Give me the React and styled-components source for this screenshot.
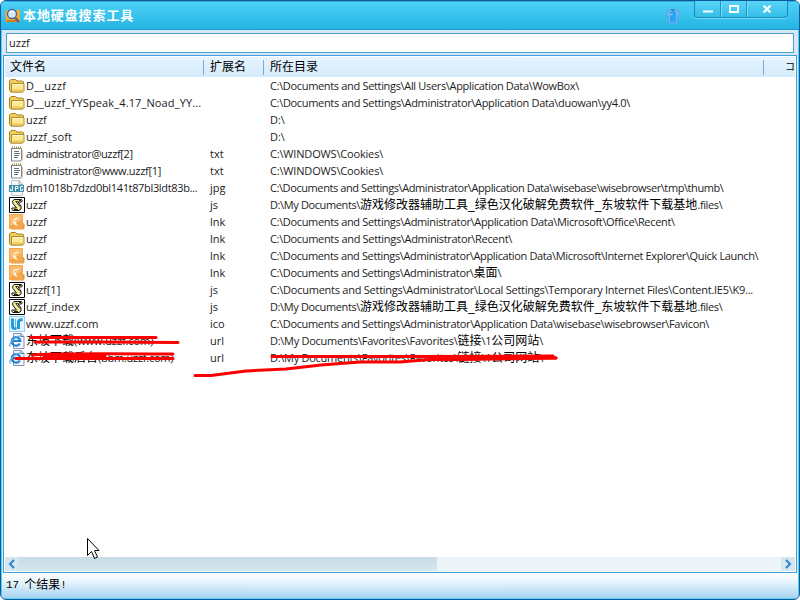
import React, { useState } from 'react';
import styled, { createGlobalStyle } from 'styled-components'

const GlobalStyle = createGlobalStyle`
body {
margin: 0;
overflow: hidden;
background-color: #ffffff;
}
* {
box-sizing: border-box;
}
svg {
flex-shrink: 0;
}
`

const latin = '"Open Sans", "Noto Sans", "Noto Sans CJK SC", sans-serif'
const cjk = '"Liberation Sans", "Noto Sans CJK SC", sans-serif'

// nameGap and dirGap are the letter spacing of each column, in px
const rows = [
  { icon: 'folder', name: 'D__uzzf', nameGap: 0.25, ext: '', dirGap: -0.33, dir: ['C:\\Documents and Settings\\All Users\\Application Data\\WowBox\\'] },
  { icon: 'folder', name: 'D__uzzf_YYSpeak_4.17_Noad_YY...', nameGap: 0.13, ext: '', dirGap: -0.32, dir: ['C:\\Documents and Settings\\Administrator\\Application Data\\duowan\\yy4.0\\'] },
  { icon: 'folder', name: 'uzzf', nameGap: 0, ext: '', dirGap: 0, dir: ['D:\\'] },
  { icon: 'folder', name: 'uzzf_soft', nameGap: 0.1, ext: '', dirGap: 0, dir: ['D:\\'] },
  { icon: 'text', name: 'administrator@uzzf[2]', nameGap: -0.36, ext: 'txt', dirGap: -0.17, dir: ['C:\\WINDOWS\\Cookies\\'] },
  { icon: 'text', name: 'administrator@www.uzzf[1]', nameGap: -0.31, ext: 'txt', dirGap: -0.17, dir: ['C:\\WINDOWS\\Cookies\\'] },
  { icon: 'jpg', name: 'dm1018b7dzd0bl141t87bl3ldt83b...', nameGap: -0.34, ext: 'jpg', dirGap: -0.41, dir: ['C:\\Documents and Settings\\Administrator\\Application Data\\wisebase\\wisebrowser\\tmp\\thumb\\'] },
  { icon: 'script', name: 'uzzf', nameGap: 0, ext: 'js', dirGap: -0.38, dir: ['D:\\My Documents\\', '游戏修改器辅助工具_绿色汉化破解免费软件_东坡软件下载基地', '.files\\'] },
  { icon: 'orange', name: 'uzzf', nameGap: 0, ext: 'lnk', dirGap: -0.34, dir: ['C:\\Documents and Settings\\Administrator\\Application Data\\Microsoft\\Office\\Recent\\'] },
  { icon: 'folder', name: 'uzzf', nameGap: 0, ext: 'lnk', dirGap: -0.32, dir: ['C:\\Documents and Settings\\Administrator\\Recent\\'] },
  { icon: 'orange', name: 'uzzf', nameGap: 0, ext: 'lnk', dirGap: -0.36, dir: ['C:\\Documents and Settings\\Administrator\\Application Data\\Microsoft\\Internet Explorer\\Quick Launch\\'] },
  { icon: 'orange', name: 'uzzf', nameGap: 0, ext: 'lnk', dirGap: -0.36, dir: ['C:\\Documents and Settings\\Administrator\\', '桌面', '\\'] },
  { icon: 'script', name: 'uzzf[1]', nameGap: 0, ext: 'js', dirGap: -0.25, dir: ['C:\\Documents and Settings\\Administrator\\Local Settings\\Temporary Internet Files\\Content.IE5\\K9...'] },
  { icon: 'script', name: 'uzzf_index', nameGap: 0, ext: 'js', dirGap: -0.38, dir: ['D:\\My Documents\\', '游戏修改器辅助工具_绿色汉化破解免费软件_东坡软件下载基地', '.files\\'] },
  { icon: 'ico', name: 'www.uzzf.com', nameGap: -0.17, ext: 'ico', dirGap: -0.35, dir: ['C:\\Documents and Settings\\Administrator\\Application Data\\wisebase\\wisebrowser\\Favicon\\'] },
  { icon: 'ie', cjkName: '东坡下载', name: '(www.uzzf.com)', nameGap: -0.1, ext: 'url', dirGap: -0.27, dir: ['D:\\My Documents\\Favorites\\Favorites\\', '链接', '\\1', '公司网站', '\\'] },
  { icon: 'ie', cjkName: '东坡下载后台', name: '(bbm.uzzf.com)', nameGap: -0.25, ext: 'url', dirGap: -0.27, dir: ['D:\\My Documents\\Favorites\\Favorites\\', '链接', '\\1', '公司网站', '\\'] },
]

const FolderIcon = () => (
  <svg width="16" height="16" viewBox="0 0 16 16">
    <path d="M.5 12.500V3L2 1.500h4.500L8 3h5.500l1 1v9l-1 1H2z" fill="#f0cf5d" stroke="#a98125" />
    <path d="M2.500 5.500h12.500v7l-1.500 1.500H2.500z" fill="#fbe993" stroke="#b48b2b" />
    <path d="M3.500 6.500h10.500" stroke="#fff9cf" />
    <path d="M3.500 11.500h11v1.500h-11z" fill="#edc657" />
  </svg>
)

const TextIcon = () => (
  <svg width="16" height="16" viewBox="0 0 16 16">
    <path d="M2.500 2.500h10v11l-1 1.500h-9z" fill="#fff" stroke="#85858c" />
    <path d="M2.500 2v13" stroke="#6678a8" />
    <path d="M3 1.500h10" stroke="#a88952" strokeWidth="2" strokeDasharray="1 1" />
    <path d="M5 5.500h5M5 7.500h6M5 9.500h5M5 11.500h4" stroke="#6c6c74" />
    <path d="M13.500 4v10l-1.500 1.500H4" fill="none" stroke="#c8c8c0" />
  </svg>
)

const JpgIcon = () => (
  <svg width="16" height="16" viewBox="0 0 16 16">
    <path d="M2.500.5h8l3 3v12h-11z" fill="#f4f5f6" stroke="#bfc8cc" />
    <path d="M10 .5v4h4" fill="#dce5e9" stroke="#9db2bc" />
    <path d="M0 5h15v7H0z" fill="#438fae" />
    <path d="M3.500 6v4.500H1.500V8.500M6.500 11V6.500H9v2H6.500M14 6.500h-2.500v4h2V8.500" fill="none" stroke="#eefaff" />
  </svg>
)

const ScriptIcon = () => (
  <svg width="16" height="16" viewBox="0 0 16 16">
    <path d="M.5.500h15v15H.5z" fill="#fff" stroke="#000" />
    <path d="M5 2.500h7.500q1.500 1 0 2.500H9l3 4q1 4-2 4.500H4q-2-1-1-2.500h4.500L4 6.500Q2.500 4 5 2.500z" fill="#f1eb9c" stroke="#111" />
    <path d="M6.500 4.500h2l-1 1 3.500 4M5 12.500h4M10 3.500h2" fill="none" stroke="#222" />
  </svg>
)

const OrangeIcon = () => (
  <svg width="16" height="16" viewBox="0 0 16 16">
    <path d="M13 8l2.500 2v4l-1 1.500H2z" fill="#dc9a48" />
    <path d="M0 1q0-1 1-1h12q1 0 1 1v13q0 1-1 1H1q-1 0-1-1z" fill="#f3a64a" />
    <path d="M1 1h12v5L1 12z" fill="#ffc682" opacity=".6" />
    <path d="M10.500 3.500Q4 3.500 3.500 7.500q1 4 5.500 4.500-3-3-1.500-5z" fill="#fff0d4" />
    <path d="M4.500 7.500l4-2" stroke="#f2a95a" />
  </svg>
)

const FaviconIcon = () => (
  <svg width="16" height="16" viewBox="0 0 16 16">
    <path d="M0 0h16v16H0z" fill="#8fd0f1" />
    <path d="M1 1h14v14H1z" fill="#e4f6fe" />
    <path d="M3.500 2.500v8q0 2 3 2h1M9.500 13V6q0-2 4-2.500" fill="none" stroke="#229bd8" strokeWidth="3" />
    <path d="M6.500 12V3" stroke="#5bb8e6" />
  </svg>
)

const IeIcon = () => (
  <svg width="16" height="16" viewBox="0 0 16 16">
    <path d="M4.500.5h7.500l3 3v12H4.500z" fill="#f2f5fd" stroke="#8793b8" />
    <path d="M12 .5v3h3" fill="#ccdaf3" stroke="#667fab" />
    <path d="M10.800 10.500a4.300 4.300 0 1 1 .5-2.500H3.500" fill="none" stroke="#2580d0" strokeWidth="2.200" />
    <path d="M1.500 13.500Q-1 12 4 7t8-3.500" fill="none" stroke="#62b4e8" strokeWidth="1.200" />
  </svg>
)

const ICONS = {
  folder: FolderIcon,
  text: TextIcon,
  jpg: JpgIcon,
  script: ScriptIcon,
  orange: OrangeIcon,
  ico: FaviconIcon,
  ie: IeIcon,
}

const AppIcon = () => (
  <svg width="16" height="16" viewBox="0 0 16 16">
    <path d="M0 4l2-2h12l1 1v10l-1 1H1z" fill="#f5ad31" />
    <path d="M1 12h13v2H2z" fill="#d47a17" />
    <circle cx="7" cy="6" r="4.500" fill="#cdeafa" stroke="#42659e" strokeWidth="1.300" />
    <path d="M4.500 5q1-2.500 4-1.500" fill="none" stroke="#fff" strokeWidth="1.500" />
    <path d="M10 9.500l4 4.500" stroke="#686270" strokeWidth="2.500" />
  </svg>
)

const ShirtIcon = () => (
  <svg width="14" height="16" viewBox="0 0 14 16">
    <path d="M4.500 1.500h5l3 1.500 1 5h-2v6l-1 1h-7l-1-1V8h-2l1-5z" fill="#6fb8f2" stroke="#62a2e4" />
    <path d="M4 4h6v10H4z" fill="#25a5f3" />
    <path d="M4.500 1.500h5L8 3.500H6z" fill="#2b80cf" />
    <path d="M4.500 6.500h2" stroke="#bfe2ff" />
  </svg>
)

const App = () => {

  const [query, setQuery] = useState('uzzf');

  return (
    <>
    <GlobalStyle/>
    <Window>
        <TitleBar>
            <AppIcon/>
            <Title>本地硬盘搜索工具</Title>
            <ShirtIcon/>
            <WindowButtons>
                <WindowButton $width={25}>
                    <svg width="12" height="10" viewBox="0 0 12 10"><path d="M1 7.500h10" stroke="#f4fcff" strokeWidth="2" /></svg>
                </WindowButton>
                <WindowButton $width={26}>
                    <svg width="12" height="10" viewBox="0 0 12 10"><path d="M2 2h8v6H2z" fill="none" stroke="#f4fcff" strokeWidth="2" /></svg>
                </WindowButton>
                <WindowButton $width={41}>
                    <svg width="12" height="10" viewBox="0 0 12 10"><path d="M2.500 1.500l7 7M9.500 1.500l-7 7" stroke="#f4fcff" strokeWidth="2.300" /></svg>
                </WindowButton>
            </WindowButtons>
        </TitleBar>

        <SearchBar>
            <SearchInput value={query} onChange={(event) => setQuery(event.target.value)} />
        </SearchBar>

        <ListPanel>
            <ListHeader>
                <HeaderCell>文件名</HeaderCell>
                <HeaderCell>扩展名</HeaderCell>
                <HeaderCell>所在目录</HeaderCell>
                <LastHeaderCell>コ</LastHeaderCell>
            </ListHeader>
            <List>
                {rows.map((row, index) => {
                    const Icon = ICONS[row.icon];
                    return (
                        <Row key={index}>
                            <NameCell>
                                <Icon/>
                                <Name $gap={row.nameGap}>
                                    {row.cjkName && <Cjk>{row.cjkName}</Cjk>}
                                    {row.name}
                                </Name>
                            </NameCell>
                            <Cell $gap={0}>{row.ext}</Cell>
                            <Cell $gap={row.dirGap}>
                                {row.dir.map((part, i) => (
                                    i % 2 ? <Cjk key={i}>{part}</Cjk> : <span key={i}>{part}</span>
                                ))}
                            </Cell>
                        </Row>
                    );
                })}
            </List>
            <ScrollBar>
                <ScrollArrow>
                    <svg width="8" height="10" viewBox="0 0 8 10"><path d="M6 1L2 5l4 4" fill="none" stroke="#2a86cc" strokeWidth="2" /></svg>
                </ScrollArrow>
                <ScrollThumb/>
                <ScrollTrack/>
                <ScrollArrow>
                    <svg width="8" height="10" viewBox="0 0 8 10"><path d="M2 1l4 4-4 4" fill="none" stroke="#2a86cc" strokeWidth="2" /></svg>
                </ScrollArrow>
            </ScrollBar>
        </ListPanel>

        <StatusBar>
            <Count>17</Count>
            <span>个结果</span>
            <Count>!</Count>
        </StatusBar>

        <Overlay width="800" height="600" viewBox="0 0 800 600">
            <g fill="none" stroke="#fb0000" strokeWidth="3" strokeLinecap="round" strokeLinejoin="round">
                <path d="M31 337.500H156" />
                <path d="M35 342h70l73 .500" />
                <path d="M16 358.500h157" />
                <path d="M32 355q20-2 141-1" />
                <path d="M45 356h60" />
                <path d="M272 356.500h150l131-.5" />
                <path d="M195 375.500h16l35-4.500 40-2 35-4 39-3h40l30-2.500h30l96-1.500" />
                <path d="M470 358h86" />
            </g>
            <path d="M87.500 538.500v17l4-4 3 7 3-1.500-3-6.500h4.500z" fill="#fff" stroke="#000" />
        </Overlay>
    </Window>
    </>
  )
}

const Window = styled.div`
position: relative;
display: flex;
flex-direction: column;
width: 800px;
height: 600px;
overflow: hidden;
border: 1px solid #0a5a9c;
border-radius: 6px;
background-color: #cfe9fa;
box-shadow: inset 0 0 0 1px #5ad0f2;
color: #1c1c24;
`
const TitleBar = styled.header`
display: flex;
align-items: center;
height: 29px;
flex-shrink: 0;
padding: 2px 11px 0 4px;
border-bottom: 1px solid #1b9ccc;
background: linear-gradient(#4fd2f6, #25b4e4);
box-shadow: inset 0 1px 0 #35a9dc;
`
const Title = styled.h1`
flex: 1;
margin: 0 0 0 2px;
font: bold 13px/16px ${cjk};
letter-spacing: 0.9px;
color: #ffffff;
`
const WindowButtons = styled.div`
display: flex;
align-self: flex-start;
height: 17px;
margin: -2px 0 0 14px;
border: 1px solid #1788bd;
border-top: none;
border-radius: 0 0 4px 4px;
background: linear-gradient(#59d4f6, #35bee9);
box-shadow: 0 1px 0 #75def8;
`
const WindowButton = styled.button`
display: flex;
align-items: center;
justify-content: center;
width: ${props => props.$width}px;
padding: 0;
border: none;
background: none;

& + & {
border-left: 1px solid #1b94c8;
box-shadow: inset 1px 0 0 #75def8;
}
`
const SearchBar = styled.div`
display: flex;
height: 24px;
flex-shrink: 0;
padding: 3px 4px 1px;
margin: 0 1px;
background-color: #d4e8f7;
`
const SearchInput = styled.input`
width: 100%;
padding: 0 2px;
border: 1px solid #4f9fd1;
outline: none;
background-color: #ffffff;
font: 11px/16px ${latin};
color: #1c1c24;
`
const ListPanel = styled.main`
display: flex;
flex-direction: column;
height: 518px;
flex-shrink: 0;
margin: 1px 2px 0;
border: 1px solid #429ddb;
background-color: #ffffff;
`
const ListHeader = styled.div`
display: grid;
grid-template-columns: 199px 60px 500px 1fr;
height: 20px;
margin: 1px 1px 0;
padding-top: 1px;
background: linear-gradient(#e6f4fe, #d5eafa);
`
const HeaderCell = styled.div`
height: 19px;
padding-left: 6px;
font: 12px/19px ${cjk};
color: #000000;
white-space: nowrap;
background: linear-gradient(#7ca9d8, #7ca9d8) no-repeat 100% 50% / 1px 15px;

&:first-child {
padding-left: 5px;
}
`
const LastHeaderCell = styled.div`
height: 19px;
font: 10px/18px ${cjk};
color: #000000;
text-align: right;
`
const List = styled.div`
flex: 1;
`
const Row = styled.div`
display: grid;
grid-template-columns: 206px 60px 1fr;
grid-template-rows: 17px;
`
const NameCell = styled.div`
display: flex;
align-items: center;
height: 17px;
padding-left: 5px;
`
const Name = styled.span`
padding-left: 1px;
font: 11px/17px ${latin};
letter-spacing: ${props => props.$gap}px;
white-space: nowrap;
`
const Cell = styled.div`
height: 17px;
font: 11px/17px ${latin};
letter-spacing: ${props => props.$gap}px;
white-space: nowrap;
`
const Cjk = styled.span`
font: 12px/12px ${cjk};
letter-spacing: 0;
color: #000000;
`
const ScrollBar = styled.div`
display: flex;
height: 14px;
margin: 0 1px 1px;
`
const ScrollArrow = styled.div`
display: flex;
align-items: center;
justify-content: center;
width: 14px;
background-color: #d5e6ee;
`
const ScrollThumb = styled.div`
width: 418px;
background: linear-gradient(#c8dce6, #d5e6ee);
`
const ScrollTrack = styled.div`
flex: 1;
background-color: #edf4f8;
`
const StatusBar = styled.footer`
display: flex;
flex: 1;
padding: 3px 0 0 4px;
margin: 0 1px 1px;
background: linear-gradient(#ffffff, #e3f3fc 40%, #a5d3f0);
font: 12px/19px ${cjk};
color: #000000;
`
const Count = styled.span`
font-family: "Liberation Mono", monospace;
font-size: 11px;
margin-right: 5px;
`
const Overlay = styled.svg`
position: absolute;
top: -1px;
left: -1px;
pointer-events: none;
`

export default App
